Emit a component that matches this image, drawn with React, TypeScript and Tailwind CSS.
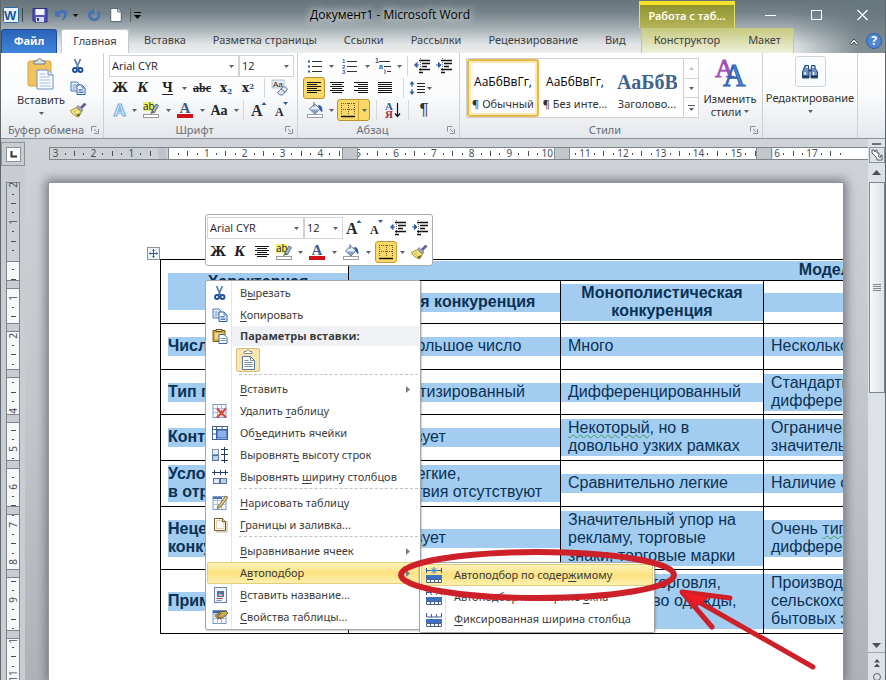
import React from "react";

const UI = "font-['Noto_Sans','Open_Sans',sans-serif]";
const DOC = "font-['Liberation_Sans',Arial,sans-serif]";
const SERIF = "font-['Liberation_Serif',serif]";
const SLAB = "font-['DejaVu_Serif',serif]";

/* ---------- small drawings ---------- */

function Caret({ className = "" }: { className?: string }) {
  return (
    <svg viewBox="0 0 5 3" className={`h-[3px] w-[5px] shrink-0 ${className}`} aria-hidden="true">
      <path d="M0 0h5L2.5 3z" fill="#5c6066" />
    </svg>
  );
}

function Svg({ size = "h-4 w-4", box = "0 0 16 16", children }: { size?: string; box?: string; children: React.ReactNode }) {
  return (
    <svg viewBox={box} className={`shrink-0 overflow-visible ${size}`} fill="none" aria-hidden="true">
      {children}
    </svg>
  );
}

const Scissors = () => (
  <Svg>
    <path d="M4.500 1l4 9M10.500 1l-4 9" stroke="#5f7fa8" strokeWidth="1.800" />
    <circle cx="5" cy="12" r="2" stroke="#1f4f9b" strokeWidth="1.900" />
    <circle cx="10.500" cy="12" r="2" stroke="#1f4f9b" strokeWidth="1.900" />
  </Svg>
);

const Copy = () => (
  <Svg>
    <path d="M1 2h6l2 2v7H1z" fill="#eef4fb" stroke="#4b76b5" />
    <path d="M2.500 5h4M2.500 7h4M2.500 9h3" stroke="#6f95cc" />
    <path d="M7 5h5l3 3v6.500H7z" fill="#f7fbff" stroke="#2d5ea8" />
    <path d="M12 5v3h3M8.500 9.500h4M8.500 11h5M8.500 12.500h5" stroke="#4f80c4" />
  </Svg>
);

const Brush = () => (
  <Svg>
    <path d="M10.500 5l4-4L16 2.500l-4 4z" fill="#5a5aa0" stroke="#3c3c72" strokeWidth=".6" />
    <path d="M8 3.500l5 4.500-1.500 2L6.500 5.500z" fill="#a8a8c0" stroke="#5b5b80" strokeWidth=".6" />
    <path d="M6.500 5.500L.5 8.500c1 3 4 5.500 8 6.500l3-5z" fill="#f3e483" stroke="#8c7a22" strokeWidth=".8" />
    <path d="M3 9l5 5M7 8l-3 2" stroke="#d9bd4a" />
    <path d="M6 12.500l2.500 2.500 2.500-4z" fill="#7d6a1d" />
  </Svg>
);

const Clipboard = ({ size = "h-8 w-8" }: { size?: string }) => (
  <Svg size={size} box="0 0 32 32">
    <rect x="3" y="3" width="23" height="25" rx="2" fill="#f1c25e" stroke="#d5a345" />
    <path d="M9 6V3h3c0-3 5-3 5 0h3v3z" fill="#e2e5ea" stroke="#70767f" />
    <path d="M12 12h11l5 5v14H12z" fill="#fdfeff" stroke="#6f8fbb" />
    <path d="M23 12v5h5" fill="#dde8f6" stroke="#6f8fbb" />
    <path d="M14.500 16h6M14.500 19h10M14.500 22h11M14.500 25h11M14.500 28h11" stroke="#9fb9dc" />
  </Svg>
);

const Grow = () => (
  <Svg box="0 0 18 18" size="h-[18px] w-[18px]">
    <text x="1" y="15" fontSize="16" fontWeight="bold" fontFamily="Liberation Serif, serif" fill="#26282b">A</text>
    <path d="M11.500 4L14 1l2.500 3z" fill="#2f5a9c" />
  </Svg>
);

const Shrink = () => (
  <Svg box="0 0 18 18" size="h-[18px] w-[18px]">
    <text x="3" y="15" fontSize="12" fontWeight="bold" fontFamily="Liberation Serif, serif" fill="#26282b">A</text>
    <path d="M11 1h5l-2.500 3z" fill="#2f5a9c" />
  </Svg>
);

const Highlighter = () => (
  <Svg>
    <rect x="0" y="0" width="11" height="9" fill="#eeee6a" />
    <text x="0" y="8" fontSize="10" fontFamily="Open Sans, sans-serif" fontWeight="normal" fill="#222">ab</text>
    <path d="M9 9l4-7 2.500 1.500-4 7z" fill="#9fb4cf" stroke="#41597c" strokeWidth=".8" />
    <path d="M7 12l2-3.500 3 2z" fill="#5e7047" />
    <rect x=".5" y="12.500" width="15" height="3" fill="#fff" stroke="#9a9a9a" />
  </Svg>
);

const FontColor = () => (
  <Svg>
    <text x="2.500" y="11" fontSize="15" fontWeight="bold" fontFamily="Liberation Serif, serif" fill="#3b5b8f">A</text>
    <rect x="0" y="12" width="16" height="4" fill="#d01216" />
  </Svg>
);

const Bucket = () => (
  <Svg>
    <path d="M7 0v5M2.500 7l5-5 5.500 4.500-5 5.500z" stroke="#56718f" fill="#e8eff8" />
    <path d="M3.500 7.500h8.500L8 11.500z" fill="#7fa4d3" />
    <path d="M11 3c3.500 0 4.500 2.500 4.500 7-2 0-2.500-3-3.500-4z" fill="#2d5da6" />
    <rect x=".5" y="12.500" width="15" height="3" fill="#fff" stroke="#9aa0a8" />
  </Svg>
);

const Borders = () => (
  <Svg>
    <path d="M1.500 1v12M8.500 1v12M14.500 1v12M1 1.500h14M1 7.500h14" stroke="#6d5a26" strokeDasharray="1 1" />
    <path d="M1 14.500h14" stroke="#111" strokeWidth="1.500" />
  </Svg>
);

const Indent = ({ right = false }: { right?: boolean }) => (
  <Svg>
    <path d="M6.500 0v16" stroke="#777" strokeDasharray="1 1" />
    <path d="M5 2.500h11M8 5.500h8M8 8.500h5M5 11.500h11M5 14.500h4" stroke="#111" strokeWidth="1.500" />
    {right ? (
      <path d="M0 7h3M2.500 4.500L5 7 2.500 9.500z" stroke="#2f5da8" fill="#2f5da8" />
    ) : (
      <path d="M5 7H3M3 4.500L.5 7 3 9.500z" stroke="#2f5da8" fill="#2f5da8" />
    )}
  </Svg>
);

const Lines = ({ kind }: { kind: "left" | "center" | "right" | "full" }) => {
  const d = {
    left: "M1 2.500h14M1 4.500h10M1 6.500h14M1 8.500h10M1 10.500h14M1 12.500h10",
    center: "M1 2.500h14M3 4.500h10M1 6.500h14M3 8.500h10M1 10.500h14M3 12.500h10",
    right: "M1 2.500h14M5 4.500h10M1 6.500h14M5 8.500h10M1 10.500h14M5 12.500h10",
    full: "M1 2.500h14M1 4.500h14M1 6.500h14M1 8.500h14M1 10.500h14M1 12.500h14",
  }[kind];
  return (
    <Svg>
      <path d={d} stroke="#141414" />
    </Svg>
  );
};

const Bullets = () => (
  <Svg>
    <path d="M5 3.500h10M5 8.500h10M5 13.500h10" stroke="#333" />
    <path d="M1 2.500h2v2H1zM1 7.500h2v2H1zM1 12.500h2v2H1z" fill="#2f5a9c" />
  </Svg>
);

const Numbers = () => (
  <Svg>
    <path d="M6 3.500h10M6 8.500h10M6 13.500h10" stroke="#333" />
    <g fontSize="6" fontWeight="bold" fontFamily="Liberation Sans, sans-serif" fill="#2f5a9c">
      <text x="1" y="5">1</text>
      <text x="1" y="10.500">2</text>
      <text x="1" y="16">3</text>
    </g>
  </Svg>
);

const MultiLevel = () => (
  <Svg>
    <path d="M4 3.500h11M9 8.500h7M12 13.500h4" stroke="#333" />
    <g fontSize="7" fontWeight="bold" fontFamily="Liberation Sans, sans-serif" fill="#2f5a9c">
      <text x="0" y="5">1</text>
      <text x="4" y="10.500">a</text>
      <text x="9" y="16">i</text>
    </g>
  </Svg>
);

const LineSpacing = () => (
  <Svg>
    <path d="M3 2v12" stroke="#2f5da8" strokeWidth="1.200" strokeDasharray="5 2" />
    <path d="M.5 4.500L3 1l2.500 3.500zM.5 11.500L3 15l2.500-3.500z" fill="#2f5da8" />
    <path d="M8 3.500h8M8 6.500h8M8 9.500h8M8 12.500h8" stroke="#222" />
  </Svg>
);

const SortIcon = () => (
  <Svg>
    <g fontSize="11" fontWeight="bold" fontFamily="Liberation Serif, serif">
      <text x="0" y="7.500" fill="#2f5a9c">А</text>
      <text x="0" y="16" fill="#a2303a">Я</text>
    </g>
    <path d="M12.500 1v13M10 11.500l2.500 3 2.500-3" stroke="#111" strokeWidth="1.200" />
  </Svg>
);

const ClearFormat = () => (
  <Svg>
    <rect x="0" y="0" width="12" height="8" fill="#e7edf5" stroke="#8492a6" strokeWidth=".5" />
    <text x="1" y="7" fontSize="8" fontFamily="Liberation Sans, sans-serif" fontWeight="normal" fill="#222">Aa</text>
    <path d="M6 12l5-5c1-1 5 1 4 3l-4 4.500c-2 1.500-6-.5-5-2.500z" fill="#dfe6f0" stroke="#5c6f8e" />
    <path d="M9 9l4 3" stroke="#5c6f8e" />
  </Svg>
);

const TextEffect = () => (
  <Svg>
    <text x="1.500" y="14" fontSize="17" fontWeight="bold" fontFamily="Liberation Sans, sans-serif" fill="#f4faff" stroke="#74b2dc" strokeWidth="1.200">A</text>
  </Svg>
);

const StylesIcon = () => (
  <Svg size="h-[30px] w-[30px]" box="0 0 30 30">
    <text x="0" y="19" fontSize="26" fontFamily="Liberation Serif, serif" fill="#a04fb4" stroke="#a04fb4" strokeWidth=".8">A</text>
    <text x="8" y="28" fontSize="31" fontFamily="Liberation Serif, serif" fill="#4f86d8" stroke="#2c5fb0" strokeWidth="1">A</text>
  </Svg>
);

const Binoculars = () => (
  <Svg>
    <path d="M3 1.500h3.500V4L7 6v8H.5V8zM9.500 1.500H13V4l2.500 4v6H9V6z" fill="#6f94c8" stroke="#24456f" />
    <path d="M3 8v3M11.500 8v3M5 2v2M11 2v2" stroke="#eef4fc" strokeWidth="1.500" />
    <path d="M.5 12.500h6.500M9 12.500h6.500" stroke="#16325a" strokeWidth="2" />
    <path d="M6.500 6.500h3" stroke="#24456f" strokeWidth="2" />
  </Svg>
);

const GridBase = () => (
  <>
    <rect x="1" y="1.500" width="13" height="13" fill="#f6f9fd" stroke="#7f9cc4" />
    <path d="M1 5.500h13M1 9.500h13M5.500 1.500v13M9.500 1.500v13" stroke="#a6bcdb" />
  </>
);

const DeleteTable = () => (
  <Svg>
    <GridBase />
    <path d="M5 5.500l9 9M14 5.500l-9 9" stroke="#d8402f" strokeWidth="2" />
  </Svg>
);

const MergeCells = () => (
  <Svg>
    <rect x=".5" y="1.500" width="15" height="13" fill="#fff" stroke="#3f649c" />
    <path d="M.5 4.500h15M4.500 1.500v13M.5 9h4M10 1.500v3" stroke="#3f649c" />
    <rect x="5" y="5" width="10" height="8" fill="#8bb2ee" stroke="#2d5aa7" />
  </Svg>
);

const EvenRows = () => (
  <Svg>
    <rect x=".5" y="2.500" width="6" height="5" fill="#e7eef8" stroke="#7d93b3" />
    <rect x=".5" y="8.500" width="6" height="5" fill="#bcd0ea" stroke="#54749f" />
    <path d="M9 2.500h7M9 7.500h7M9 13.500h7M12.500 0v16" stroke="#243d63" />
  </Svg>
);

const EvenCols = () => (
  <Svg>
    <path d="M0 3.500h16M2.500 1v5M8.500 1v5M13.500 1v5" stroke="#243d63" />
    <rect x="1.500" y="9.500" width="6" height="5" fill="#e7eef8" stroke="#54749f" />
    <rect x="8.500" y="9.500" width="6" height="5" fill="#bcd0ea" stroke="#54749f" />
  </Svg>
);

const DrawTable = () => (
  <Svg>
    <GridBase />
    <path d="M1 3h9" stroke="#4776bb" strokeWidth="2" />
    <path d="M6 11.500L13.500 1 16 2.500 8.500 12l-3 1.500z" fill="#e5c682" stroke="#6e5221" strokeWidth=".8" />
  </Svg>
);

const BordersFill = () => (
  <Svg>
    <path d="M4 15h11V4" stroke="#c2ac85" />
    <path d="M2.500 1.500h8l3 3v9h-11z" fill="#fff" stroke="#7c542a" />
    <path d="M4.500 3.500h5.500v2h2v6H4.500z" stroke="#e2d0a6" />
    <path d="M10.500 1.500v3h3" fill="#f4ead2" stroke="#7c542a" />
  </Svg>
);

const Caption = () => (
  <Svg>
    <rect x="2.500" y=".5" width="12" height="15" fill="#f0f4fa" stroke="#6f84a4" />
    <rect x="5" y="4" width="7" height="6" fill="#5272a4" />
    <path d="M6 9l2-3 3 3z" fill="#e7b09d" />
    <path d="M4.500 11.500h6" stroke="#b5403a" />
    <path d="M4.500 13.500h5" stroke="#7890b5" />
  </Svg>
);

const TableProps = () => (
  <Svg>
    <GridBase />
    <path d="M1 3h14" stroke="#3766ac" strokeWidth="2.500" />
    <path d="M3 7l5-4 6-1 2 2-4 4-6 2z" fill="#caa658" stroke="#5f4a1c" strokeWidth=".8" />
    <path d="M5 7l4 3M9 4l-3 3" stroke="#5f4a1c" />
  </Svg>
);

const PasteSmall = () => (
  <Svg>
    <path d="M1 2.500h12v11H1z" fill="#d8ab3f" stroke="#7d5c17" />
    <path d="M4 3.500V1.500h6v2z" fill="#efe6bd" stroke="#5c5026" />
    <path d="M3 5h8v6H3z" fill="#f2d884" />
    <path d="M7 6.500h5l3 3v6H7z" fill="#fff" stroke="#3f68a7" />
    <path d="M8.500 10.500h5M8.500 12.500h5" stroke="#6d93cb" />
  </Svg>
);

const KeepText = () => (
  <Svg size="h-5 w-5" box="0 0 20 20">
    <path d="M6 3.500v-2h2.500c0-2 3-2 3 0H14v2z" fill="#fff" stroke="#8a8f96" />
    <path d="M4.500 6.500h8l4 4v9h-12z" fill="#fff" stroke="#55749f" />
    <path d="M12.500 6.500v4h4M6.500 10.500h4M6.500 12.500h8M6.500 14.500h8M6.500 16.500h8" stroke="#7d8da4" />
  </Svg>
);

const AutoFit = ({ kind }: { kind: "content" | "window" | "fixed" }) => (
  <Svg>
    {kind === "content" && (
      <>
        <path d="M.5 1v5M15.500 1v5M0 3.500h5M11 3.500h5" stroke="#3a5b8c" />
        <path d="M8 0v7M4.500 3.500h7M5.500 1l5 5M10.500 1l-5 5" stroke="#3d86d0" />
      </>
    )}
    {kind === "window" && <path d="M.5 1v5M15.500 1v5M1 3.500h5M10 3.500h5M6 1L4 3.500 6 6M10 1l2 2.500L10 6" stroke="#3a5b8c" />}
    {kind === "fixed" && <path d="M.5 2v4h15V2M5.500 3v3M10.500 3v3" stroke="#3a5b8c" />}
    <rect x="0" y="8" width="16" height="4" fill="#3f71c2" />
    <path d="M.5 12.500h15v3H.5zM4.500 12.500v3M8.500 12.500v3M12.500 12.500v3" fill="#f6f9fd" stroke="#4b6285" />
  </Svg>
);

/* ---------- controls ---------- */

function Tool({ label, w, children }: { label: string; w: string; children: React.ReactNode }) {
  return (
    <button type="button" aria-label={label} className={`flex h-[22px] shrink-0 items-center justify-center ${w}`}>
      {children}
    </button>
  );
}

const Divider = ({ w = "w-2" }: { w?: string }) => (
  <span className={`flex h-5 shrink-0 justify-center ${w}`}>
    <span className="w-px bg-[#d3d6da]" />
  </span>
);

function Combo({ label, value, w }: { label: string; value: string; w: string }) {
  return (
    <span className={`relative flex h-[22px] shrink-0 items-center border border-[#d0d3d7] bg-white ${w}`}>
      <select aria-label={label} defaultValue={value} className="h-full w-full appearance-none bg-transparent pl-0.5 font-['Open_Sans',sans-serif] text-[11px] font-normal text-[#1c1c1c]">
        <option>{value}</option>
      </select>
      <Caret className="pointer-events-none absolute right-1" />
    </span>
  );
}

function Group({ title, w, launcher = true, children }: { title: string; w: string; launcher?: boolean; children: React.ReactNode }) {
  return (
    <section className={`flex shrink-0 flex-col border-r border-[#cdd1d6] ${w}`}>
      <div className="flex-1">{children}</div>
      <footer className="flex h-4 items-center text-[11px] leading-4 text-[#6a6f78]">
        <span className="flex-1 whitespace-nowrap text-center">{title}</span>
        {launcher && (
          <button type="button" aria-label={`${title}: параметры`} className="mr-1 h-2 w-2 shrink-0">
            <Svg size="h-2 w-2" box="0 0 8 8">
              <path d="M.5 5.500v-5h5M3 3l3 3M7.500 3v4.500H3" stroke="#8b9099" />
            </Svg>
          </button>
        )}
      </footer>
    </section>
  );
}

/* ---------- title bar and tabs ---------- */

function TitleBar() {
  return (
    <header className="flex h-7 shrink-0">
      <div className="flex w-[140px] items-center pl-0.5 pt-0.5">
        <Svg>
          <rect x=".5" y=".5" width="15" height="15" rx="1" fill="#eaf3fb" stroke="#2c6aa8" />
          <text x="1" y="12.500" fontSize="13" fontWeight="bold" fontFamily="Liberation Sans, sans-serif" fill="#17599c">W</text>
        </Svg>
        <span className="mx-[3px] h-3.5 w-px bg-[#3f484c]" />
        <Tool label="Сохранить" w="w-7">
          <Svg>
            <path d="M1 1.500h14v13.500H2.500L1 13.500z" fill="#5353b8" stroke="#2c2c7c" />
            <rect x="3.500" y="2" width="9" height="6" fill="#f2f4fb" />
            <rect x="4" y="10" width="8" height="5" fill="#d4d8ea" />
            <rect x="5" y="11" width="2" height="3" fill="#33337a" />
          </Svg>
        </Tool>
        <Tool label="Отменить" w="w-4">
          <Svg size="h-3.5 w-3.5">
            <path d="M0 2v8h7L4.500 7.500C8 4 12 6 10 10l-3 4.500C15 12 16 3 10 2 7 1.500 4.500 3.500 3 5z" fill="#4472b8" />
          </Svg>
        </Tool>
        <Tool label="Список отмены" w="w-3">
          <svg viewBox="0 0 5 3" className="h-[3px] w-[5px]"><path d="M0 0h5L2.500 3z" /></svg>
        </Tool>
        <Tool label="Повторить" w="w-6">
          <Svg size="h-3.5 w-3.5">
            <path d="M4.500 4a5.500 5.500 0 1 0 7.500 0" stroke="#4472b8" strokeWidth="3" />
            <path d="M8 0v7H1z" fill="#4472b8" />
          </Svg>
        </Tool>
        <Tool label="Создать" w="w-5">
          <Svg size="h-3.5 w-3.5">
            <path d="M2 .5h8l4 4v11H2z" fill="#fff" stroke="#4e5a66" />
            <path d="M10 .5v4h4" fill="#cfdae8" stroke="#4e5a66" />
          </Svg>
        </Tool>
        <span className="ml-1 mr-1 h-3.5 w-px bg-[#565f64]" />
        <button type="button" aria-label="Настройка панели" className="flex flex-col items-center gap-0.5">
          <span className="h-px w-[7px] bg-black" />
          <svg viewBox="0 0 7 4" className="h-1 w-[7px]"><path d="M0 0h7L3.500 4z" /></svg>
        </button>
      </div>
      <h1 className="flex flex-1 items-center justify-center pt-0.5 font-['Open_Sans',sans-serif] text-[12px] text-black [text-shadow:0_0_8px_#fff,0_0_10px_#dfe5e8]">
        Документ1 - Microsoft Word
      </h1>
      <div className="mt-px flex w-24 shrink-0 items-center justify-center border-x border-t-4 border-x-[#dfe06c] border-t-[#f6e02c] bg-linear-to-b from-[#8f942f] to-[#b5b55a] text-[11px] font-semibold text-[#fffff0]">
        Работа с таб...
      </div>
      <div className="ml-3 flex">
        <button type="button" aria-label="Свернуть" className="flex w-[46px] items-center justify-center">
          <Svg size="h-[11px] w-[11px]" box="0 0 11 11"><path d="M0 6.500h11" stroke="#fff" /></Svg>
        </button>
        <button type="button" aria-label="Развернуть" className="flex w-[46px] items-center justify-center">
          <Svg size="h-[11px] w-[11px]" box="0 0 11 11"><path d="M.5 1.500h10v9H.5z" stroke="#fff" /></Svg>
        </button>
        <button type="button" aria-label="Закрыть" className="flex w-[46px] items-center justify-center">
          <Svg size="h-[11px] w-[11px]" box="0 0 11 11"><path d="M.5 1l10 10M10.500 1l-10 10" stroke="#fff" strokeWidth="1.200" /></Svg>
        </button>
      </div>
    </header>
  );
}

function Tabs() {
  const tabs = ["Вставка", "Разметка страницы", "Ссылки", "Рассылки", "Рецензирование", "Вид"];
  return (
    <nav className="flex h-[25px] shrink-0 items-stretch text-[11px] text-[#3c3f43]">
      <button type="button" className="mt-px w-14 shrink-0 rounded-t-[3px] border border-b-0 border-[#1d4a93] bg-linear-to-b from-[#2a63b8] to-[#3f86dd] font-bold text-white">Файл</button>
      <button type="button" className="ml-1 mr-px mt-px w-[68px] shrink-0 rounded-t-[3px] border border-b-0 border-[#c3c8cd] bg-white">Главная</button>
      {tabs.map((t) => (
        <button key={t} type="button" className="shrink-0 pl-3.5 pr-[13px]">{t}</button>
      ))}
      <div className="ml-0.5 flex shrink-0 border-x border-[#c9cb6a] bg-linear-to-b from-[#c5c87b] to-[#f0f1dc]">
        <button type="button" className="pl-3 pr-3.5">Конструктор</button>
        <button type="button" className="pl-3.5 pr-3">Макет</button>
      </div>
      <div className="flex flex-1 items-center justify-end gap-[7px] pr-[3px]">
        <button type="button" aria-label="Свернуть ленту">
          <Svg size="h-2.5 w-2.5" box="0 0 10 10"><path d="M1 7.500L5 3l4 4.500L7.500 9 5 6 2.500 9z" fill="#fff" stroke="#333" strokeWidth=".9" /></Svg>
        </button>
        <button type="button" aria-label="Справка" className="flex h-4 w-4 items-center justify-center rounded-full border border-[#2f5ea8] bg-[#4f86d3] text-[12px] font-bold leading-none text-white">?</button>
      </div>
    </nav>
  );
}

/* ---------- ribbon ---------- */

function Ribbon() {
  return (
    <div className="flex h-[86px] shrink-0 border-b border-[#8b9199] bg-linear-to-b from-white via-[#fafbfc] to-[#e4e7ec]">
      <Group title="Буфер обмена" w="w-[103px]">
        <div className="flex pl-[15px]">
          <button type="button" className="flex w-[50px] flex-col items-center pt-[5px] text-[11px] text-[#333]">
            <Clipboard />
            <span className="mt-0.5 leading-4">Вставить</span>
            <Caret className="mt-1" />
          </button>
          <div className="flex flex-col pt-0.5">
            <Tool label="Вырезать" w="w-6"><Scissors /></Tool>
            <Tool label="Копировать" w="w-6"><Copy /></Tool>
            <Tool label="Формат по образцу" w="w-6"><Brush /></Tool>
          </div>
        </div>
      </Group>

      <Group title="Шрифт" w="w-[194px]">
        <div className="pl-[5px] pt-0.5">
          <div className="flex">
            <Combo label="Шрифт" value="Arial CYR" w="w-[130px]" />
            <Combo label="Размер шрифта" value="12" w="w-[55px]" />
          </div>
          <div className={`flex items-center text-[12px] font-bold text-[#222] ${SLAB}`}>
            <Tool label="Полужирный" w="w-[22px]">Ж</Tool>
            <Tool label="Курсив" w="w-6"><i>К</i></Tool>
            <Tool label="Подчеркнутый" w="w-[25px]"><u className="underline-offset-2">Ч</u></Tool>
            <Tool label="Тип подчеркивания" w="w-2"><Caret /></Tool>
            <Tool label="Зачеркнутый" w="w-7"><s className={`text-[12px] ${SERIF}`}>abc</s></Tool>
            <Tool label="Подстрочный" w="w-5"><span>x<sub className="text-[7px] text-[#2f5a9c]">2</sub></span></Tool>
            <Tool label="Надстрочный" w="w-6"><span>x<sup className="text-[7px] text-[#2f5a9c]">2</sup></span></Tool>
            <Divider w="w-2" />
            <Tool label="Очистить формат" w="w-6"><ClearFormat /></Tool>
          </div>
          <div className={`flex items-center text-[14px] font-bold text-[#222] ${SERIF}`}>
            <Tool label="Текстовые эффекты" w="w-[22px]"><TextEffect /></Tool>
            <Tool label="Варианты эффектов" w="w-1.5"><Caret /></Tool>
            <Tool label="Цвет выделения" w="w-7"><Highlighter /></Tool>
            <Tool label="Варианты выделения" w="w-1.5"><Caret /></Tool>
            <Tool label="Цвет текста" w="w-7"><FontColor /></Tool>
            <Tool label="Варианты цвета" w="w-1.5"><Caret /></Tool>
            <Tool label="Регистр" w="w-7">Aa</Tool>
            <Tool label="Варианты регистра" w="w-1.5"><Caret /></Tool>
            <Divider w="w-2" />
            <Tool label="Увеличить размер" w="w-6"><Grow /></Tool>
            <Tool label="Уменьшить размер" w="w-5"><Shrink /></Tool>
          </div>
        </div>
      </Group>

      <Group title="Абзац" w="w-[162px]">
        <div className="pl-[5px] pt-0.5">
          <div className="flex items-center">
            <Tool label="Маркеры" w="w-6"><Bullets /></Tool>
            <Tool label="Виды маркеров" w="w-2"><Caret /></Tool>
            <Tool label="Нумерация" w="w-7"><Numbers /></Tool>
            <Tool label="Виды нумерации" w="w-2"><Caret /></Tool>
            <Tool label="Многоуровневый список" w="w-6"><MultiLevel /></Tool>
            <Tool label="Виды списков" w="w-2"><Caret /></Tool>
            <Divider w="w-2" />
            <Tool label="Уменьшить отступ" w="w-[22px]"><Indent /></Tool>
            <Tool label="Увеличить отступ" w="w-[22px]"><Indent right /></Tool>
          </div>
          <div className="flex items-center">
            <button type="button" aria-label="По левому краю" className="flex h-[22px] w-[22px] items-center justify-center rounded-[3px] border border-[#b9912f] bg-[#fbd968]">
              <Lines kind="left" />
            </button>
            <Tool label="По центру" w="w-6"><Lines kind="center" /></Tool>
            <Tool label="По правому краю" w="w-6"><Lines kind="right" /></Tool>
            <Tool label="По ширине" w="w-6"><Lines kind="full" /></Tool>
            <Divider w="w-3" />
            <Tool label="Интервал" w="w-4"><LineSpacing /></Tool>
            <Tool label="Варианты интервала" w="w-2"><Caret /></Tool>
          </div>
          <div className="flex items-center">
            <Tool label="Заливка" w="w-6"><Bucket /></Tool>
            <Tool label="Варианты заливки" w="w-2"><Caret /></Tool>
            <div className="ml-0.5 flex h-[22px] w-[33px] rounded-[3px] border border-[#b9912f] bg-[#fbd968]">
              <button type="button" aria-label="Границы" className="flex w-5 items-center justify-center"><Borders /></button>
              <button type="button" aria-label="Виды границ" className="flex flex-1 items-center justify-center border-l border-[#cfa63f]"><Caret /></button>
            </div>
            <Divider w="w-3" />
            <Tool label="Сортировка" w="w-[22px]"><SortIcon /></Tool>
            <Divider w="w-2" />
            <Tool label="Показать все знаки" w="w-6"><span className="font-['Liberation_Sans',sans-serif] text-[17px] text-[#333]">¶</span></Tool>
          </div>
        </div>
      </Group>

      <Group title="Стили" w="w-[303px]">
        <div className="flex pl-[6px] pt-[5px]">
          <div className="flex h-[60px] w-[233px] border border-[#cfd3d8] bg-white text-[11px] text-[#333]">
            <button type="button" className="flex w-[72px] shrink-0 flex-col items-center justify-between rounded-[3px] border-2 border-[#e6b94c] pb-[3px] pt-[11px] shadow-[inset_0_0_0_2px_#fdebac]">
              <span className="font-['Open_Sans',sans-serif] text-[12px] leading-5 text-black">АаБбВвГг,</span>
              <span className="whitespace-nowrap leading-4">¶ Обычный</span>
            </button>
            <button type="button" className="flex w-[72px] shrink-0 flex-col items-center justify-between pb-[5px] pt-[13px]">
              <span className="font-['Open_Sans',sans-serif] text-[12px] leading-5 text-black">АаБбВвГг,</span>
              <span className="whitespace-nowrap leading-4">¶ Без инте...</span>
            </button>
            <button type="button" className="flex w-[72px] shrink-0 flex-col items-center justify-between pb-[5px] pt-[13px]">
              <span className={`w-[60px] overflow-hidden text-left text-[20px] font-bold leading-5 text-[#3d638e] ${SERIF}`}>АаБбВв</span>
              <span className="whitespace-nowrap leading-4">Заголово...</span>
            </button>
            <div className="flex flex-1 flex-col border-l border-[#cfd3d8]">
              <button type="button" aria-label="Вверх" className="flex flex-1 items-center justify-center border-b border-[#cfd3d8]"><Caret className="rotate-180 opacity-40" /></button>
              <button type="button" aria-label="Вниз" className="flex flex-1 items-center justify-center border-b border-[#cfd3d8]"><Caret /></button>
              <button type="button" aria-label="Все стили" className="flex flex-1 flex-col items-center justify-center gap-0.5"><span className="h-px w-[7px] bg-[#5c6066]" /><Caret /></button>
            </div>
          </div>
          <button type="button" className="flex w-[62px] flex-col items-center text-[11px] leading-[13px] text-[#333]">
            <StylesIcon />
            <span className="mt-1">Изменить</span>
            <span className="flex items-center gap-[3px]">стили <Caret /></span>
          </button>
        </div>
      </Group>

      <Group title="" w="w-[95px]" launcher={false}>
        <button type="button" className="flex w-full flex-col items-center pt-[3px] text-[11px] text-[#333]">
          <span className="flex h-[31px] w-[31px] items-center justify-center rounded-[3px] border border-[#cfd3d8] bg-[#fbfcfd]"><Binoculars /></span>
          <span className="mt-[3px] leading-4">Редактирование</span>
          <Caret className="mt-1" />
        </button>
      </Group>
    </div>
  );
}

/* ---------- rulers ---------- */

function HorizontalRuler() {
  const cells = Array.from({ length: 22 }, (_, i) => i - 3);
  return (
    <div className="relative ml-6 mt-2 h-[13px] overflow-hidden border-y border-l border-[#7d838b] bg-white">
      <div className="absolute inset-y-0 left-0 w-[119px] border-r border-[#7d838b] bg-[#cdd1d6]" />
      <div className="relative -ml-[18px] grid h-full w-[832px] grid-cols-22 text-[10px] leading-[11px] text-[#4a4e54]">
        {cells.map((n) => (
          <div key={n} className="grid grid-cols-4 place-items-center">
            <span className="h-[5px] w-px bg-[#4a4e54]" />
            <span className="h-0.5 w-px bg-[#4a4e54]" />
            <span className="w-0"><span className="flex justify-center whitespace-nowrap">{n === 0 || n === 18 ? "" : Math.abs(n)}</span></span>
            <span className={n === 18 ? "" : "h-0.5 w-px bg-[#4a4e54]"} />
          </div>
        ))}
      </div>
      <span className="absolute inset-y-0 left-[108px] w-2 bg-[#c0c4c9]" />
      <span className="absolute inset-y-0 left-[292px] w-4 border-x border-[#8b9097] bg-[#c3c7cc]" />
      <span className="absolute inset-y-0 left-[504px] w-4 border-x border-[#8b9097] bg-[#c3c7cc]" />
      <span className="absolute inset-y-0 left-[706px] w-4 border-x border-[#8b9097] bg-[#c3c7cc]" />
    </div>
  );
}

function VerticalRuler() {
  const cells = Array.from({ length: 14 }, (_, i) => i - 2);
  const marks = ["top-[97px]", "top-[140px]", "top-[186px]", "top-[231px]", "top-[277px]", "top-[323px]", "top-[386px]", "top-[447px]"];
  return (
    <div className="relative ml-[5px] mt-4 w-3.5 flex-1 overflow-hidden border-x border-t border-[#7d838b] bg-[#f7f8f9]">
      <div className="absolute inset-x-0 top-0 h-[79px] border-b border-[#7d838b] bg-[#cdd1d6]" />
      <div className="relative -mt-[22px] grid h-[529px] grid-rows-14 text-[10px] leading-[10px] text-[#4a4e54]">
        {cells.map((n) => (
          <div key={n} className="grid grid-rows-4 place-items-center">
            <span className="h-px w-[5px] bg-[#4a4e54]" />
            <span className="h-px w-0.5 bg-[#4a4e54]" />
            <span className="flex h-0 w-0 items-center justify-center"><span className="-rotate-90">{n === 0 ? "" : Math.abs(n)}</span></span>
            <span className="h-px w-0.5 bg-[#4a4e54]" />
          </div>
        ))}
      </div>
      {marks.map((m) => (
        <span key={m} className={`absolute inset-x-0 h-[9px] border-y border-[#7d838b] bg-[#c9cdd2] ${m}`} />
      ))}
    </div>
  );
}

/* ---------- document ---------- */

function Mark({ lines, className = "" }: { lines: React.ReactNode[]; className?: string }) {
  return (
    <div className={`min-h-[19px] overflow-hidden whitespace-nowrap bg-[#a3cdf0] pb-px leading-[18px] ${className}`}>
      {lines.map((l, i) => (
        <div key={i}>{l}</div>
      ))}
    </div>
  );
}

const Wavy = ({ children }: { children: React.ReactNode }) => (
  <span className="underline decoration-[#3f9a5c] decoration-wavy decoration-1">{children}</span>
);

const rows: { h: string; head: string[]; cells: React.ReactNode[][] }[] = [
  { h: "h-[46px]", head: ["Число фирм"], cells: [["Очень большое число"], ["Много"], ["Несколько"]] },
  { h: "h-[45px]", head: ["Тип продукта"], cells: [["Стандартизированный"], ["Дифференцированный"], ["Стандартизированный", "дифференцированный"]] },
  { h: "h-[46px]", head: ["Контроль"], cells: [["Отсутствует"], [<><Wavy>Некоторый</Wavy>, но в</>, "довольно узких рамках"], ["Ограниченный", "значительный"]] },
  { h: "h-[46px]", head: ["Условия", "в отрасли"], cells: [["Очень легкие,", "препятствия отсутствуют"], ["Сравнительно легкие"], ["Наличие ограничений"]] },
  { h: "h-[63px]", head: ["Неценовая", "конкуренция"], cells: [["Отсутствует"], ["Значительный упор на", "рекламу, торговые", "знаки, торговые марки"], [<>Очень <Wavy>типична</Wavy></>, "дифференциация"]] },
  { h: "h-[64px]", head: ["Примеры"], cells: [["Сельское хозяйство"], ["Розничная торговля,", "производство одежды,", "обуви"], ["Производство", "сельскохозяйственных", "бытовых электроприборов"]] },
];

function DocumentTable() {
  const cell = "border border-black p-0 align-middle";
  return (
    <table className={`ml-[111px] mt-[76px] w-[1206px] table-fixed border-collapse text-[16px] text-[#0b3154] ${DOC}`}>
      <colgroup>
        <col className="w-[188px]" />
        <col className="w-[212px]" />
        <col className="w-[203px]" />
        <col />
      </colgroup>
      <thead>
        <tr className="h-[21px]">
          <th rowSpan={2} className={`${cell} pl-[7px]`}><Mark lines={["Характерная", "особенность"]} /></th>
          <th colSpan={3} className={cell}><Mark lines={["Модели рынка"]} /></th>
        </tr>
        <tr className="h-[43px]">
          <th className={cell}><Mark lines={["Чистая конкуренция"]} /></th>
          <th className={cell}><Mark lines={["Монополистическая", "конкуренция"]} /></th>
          <th className={cell}><Mark lines={["Олигополия"]} /></th>
        </tr>
      </thead>
      <tbody>
        {rows.map((r) => (
          <tr key={r.head[0]} className={r.h}>
            <th className={`${cell} pl-[7px] text-left`}><Mark lines={r.head} /></th>
            {r.cells.map((c, i) => (
              <td key={i} className={cell}><Mark lines={c} className="pl-[7px]" /></td>
            ))}
          </tr>
        ))}
      </tbody>
    </table>
  );
}

/* ---------- floating toolbar and menus ---------- */

function MiniToolbar() {
  return (
    <div role="toolbar" aria-label="Форматирование" className="absolute left-[156px] top-[31px] w-[228px] rounded-[3px] border border-[#a7abb0] bg-white p-px">
      <div className="flex h-6 items-center">
        <Combo label="Шрифт выделения" value="Arial CYR" w="w-[97px]" />
        <Combo label="Размер выделения" value="12" w="w-[39px]" />
        <Tool label="Увеличить" w="w-[22px]"><Grow /></Tool>
        <Tool label="Уменьшить" w="w-[22px]"><Shrink /></Tool>
        <Tool label="Уменьшить отступ" w="w-[22px]"><Indent /></Tool>
        <Tool label="Увеличить отступ" w="w-[22px]"><Indent right /></Tool>
      </div>
      <div className={`flex h-6 items-center text-[12px] font-bold text-[#222] ${SLAB}`}>
        <Tool label="Полужирный" w="w-[22px]">Ж</Tool>
        <Tool label="Курсив" w="w-[22px]"><i>К</i></Tool>
        <Tool label="По центру" w="w-[22px]"><Lines kind="center" /></Tool>
        <Tool label="Выделение" w="w-[22px]"><Highlighter /></Tool>
        <Tool label="Варианты выделения" w="w-2.5"><Caret /></Tool>
        <Tool label="Цвет текста" w="w-6"><FontColor /></Tool>
        <Tool label="Варианты цвета" w="w-2.5"><Caret /></Tool>
        <Tool label="Заливка" w="w-6"><Bucket /></Tool>
        <Tool label="Варианты заливки" w="w-2.5"><Caret /></Tool>
        <button type="button" aria-label="Границы" className="ml-0.5 flex h-[22px] w-[22px] items-center justify-center rounded-[3px] border border-[#c49a37] bg-[#fbd968]"><Borders /></button>
        <Tool label="Виды границ" w="w-2.5"><Caret /></Tool>
        <Tool label="Формат по образцу" w="w-6"><Brush /></Tool>
      </div>
    </div>
  );
}

function MenuLabel({ text }: { text: string }) {
  const at = text.indexOf("&");
  return (
    <span className="whitespace-nowrap">
      {text.slice(0, at)}
      <span className="underline underline-offset-2">{text[at + 1]}</span>
      {text.slice(at + 2)}
    </span>
  );
}

function MenuItem({ text, icon, sub = false, active = false }: { text: string; icon?: React.ReactNode; sub?: boolean; active?: boolean }) {
  const skin = active ? "rounded-[2px] border-[#e3cf77] bg-linear-to-b from-[#fdf3b8] via-[#fbe17f] to-[#fdf0ae]" : "border-transparent";
  return (
    <button type="button" role="menuitem" className={`relative flex h-[22px] w-full items-center border text-left ${skin}`}>
      <span className="flex w-6 shrink-0 justify-center">{icon}</span>
      <span className="flex-1 pl-2"><MenuLabel text={text} /></span>
      {sub && (
        <svg viewBox="0 0 4 7" className="mr-2 h-[7px] w-1"><path d="M0 0v7l4-3.500z" fill="#7b7f85" /></svg>
      )}
    </button>
  );
}

const MenuLine = () => <div className="ml-8 mr-px h-1 border-t border-dashed border-[#bfc3c8]" />;

function ContextMenu() {
  return (
    <div role="menu" className="absolute left-[156px] top-[97px] w-[216px] rounded-[2px] border border-[#a3a7ac] bg-[linear-gradient(90deg,#fff_25px,#e2e4e7_25px,#e2e4e7_26px,#fff_26px)] p-px text-[11px] text-[#3b3b3b] shadow-[1px_1px_2px_#0003]">
      <MenuItem text="В&ырезать" icon={<Scissors />} />
      <MenuItem text="&Копировать" icon={<Copy />} />
      <div className="flex h-5 items-center">
        <span className="flex w-[25px] shrink-0 justify-center"><PasteSmall /></span>
        <span className="flex h-full flex-1 items-center bg-[#eff1f5] pl-2 font-['Open_Sans',sans-serif] font-bold">Параметры вставки:</span>
      </div>
      <div className="flex h-7 items-center pl-[29px]">
        <button type="button" aria-label="Сохранить только текст" className="flex h-6 w-6 items-center justify-center rounded-[2px] border border-[#dcbd7c] bg-[#fbe5b0]"><KeepText /></button>
      </div>
      <MenuLine />
      <MenuItem text="&Вставить" sub />
      <MenuItem text="Удалить &таблицу" icon={<DeleteTable />} />
      <MenuItem text="Об&ъединить ячейки" icon={<MergeCells />} />
      <MenuItem text="Выровнят&ь высоту строк" icon={<EvenRows />} />
      <MenuItem text="Выровнять &ширину столбцов" icon={<EvenCols />} />
      <MenuLine />
      <MenuItem text="&Нарисовать таблицу" icon={<DrawTable />} />
      <MenuItem text="&Границы и заливка..." icon={<BordersFill />} />
      <MenuLine />
      <MenuItem text="&Выравнивание ячеек" sub />
      <MenuItem text="А&втоподбор" sub active />
      <MenuItem text="&Вставить название..." icon={<Caption />} />
      <MenuItem text="&Свойства таблицы..." icon={<TableProps />} />
    </div>
  );
}

function AutoFitMenu() {
  return (
    <div role="menu" className="absolute left-[370px] top-[379px] w-[236px] rounded-[2px] border border-[#a3a7ac] bg-[linear-gradient(90deg,#fff_25px,#e2e4e7_25px,#e2e4e7_26px,#fff_26px)] px-px pb-0.5 pt-px text-[11px] text-[#3b3b3b] shadow-[1px_1px_2px_#0003]">
      <MenuItem text="Автоподбор по содер&жимому" icon={<AutoFit kind="content" />} active />
      <MenuItem text="Автоподбор по ширине &окна" icon={<AutoFit kind="window" />} />
      <MenuItem text="&Фиксированная ширина столбца" icon={<AutoFit kind="fixed" />} />
    </div>
  );
}

const Annotation = () => (
  <svg viewBox="0 0 794 497" className="pointer-events-none absolute left-0 top-0 h-[497px] w-[794px]" fill="none" stroke="#ce2029" strokeLinecap="round" strokeLinejoin="round" aria-hidden="true">
    <ellipse cx="488.500" cy="392" rx="136.500" ry="23" strokeWidth="6" />
    <path d="M764 484L634 410M681 415l-48-6 30 35" strokeWidth="5" />
    <path d="M634 409l26 6-13 8z" fill="#ef1c24" stroke="none" />
  </svg>
);

function ScrollBar() {
  return (
    <div className="flex w-[17px] shrink-0 flex-col items-center bg-[#dde1e8]">
      <span className="mt-1 h-0.5 w-[9px] shrink-0 bg-[#6b7079]" />
      <button type="button" aria-label="Линейка" className="mt-0.5 flex h-4 w-4 shrink-0 items-center justify-center border border-[#8d939b]">
        <Svg size="h-3 w-3" box="0 0 12 12"><path d="M1 1h2l1 2 1-2h1v3h2v2L7 7l2 2 1-3h1v5H6V9L4 7 1 4z" fill="#fff" stroke="#555b63" /></Svg>
      </button>
      <button type="button" aria-label="Прокрутить вверх" className="flex h-[19px] shrink-0 items-center justify-center">
        <svg viewBox="0 0 9 5" className="h-[5px] w-[9px]"><path d="M0 5h9L4.500 0z" fill="#4b5058" /></svg>
      </button>
      <div className="flex h-[211px] w-4 shrink-0 flex-col items-center justify-center gap-px border border-[#7f858e] bg-linear-to-r from-[#f7f8fa] to-[#dfe2e8]">
        <span className="h-px w-2 bg-[#7f858e]" />
        <span className="h-px w-2 bg-[#7f858e]" />
        <span className="h-px w-2 bg-[#7f858e]" />
        <span className="h-px w-2 bg-[#7f858e]" />
      </div>
      <div className="flex-1" />
      <button type="button" aria-label="Прокрутить вниз" className="flex h-[14px] shrink-0 items-center justify-center">
        <svg viewBox="0 0 9 5" className="h-[5px] w-[9px]"><path d="M0 0h9L4.500 5z" fill="#4b5058" /></svg>
      </button>
      <button type="button" aria-label="Предыдущая страница" className="flex h-[21px] w-full shrink-0 items-center justify-center border-t border-[#a4a9b0]">
        <svg viewBox="0 0 6 8" className="h-2 w-1.5"><path d="M0 3.500h6L3 0zM0 8h6L3 4.500z" fill="#4b5058" /></svg>
      </button>
      <button type="button" aria-label="Выбор объекта" className="flex h-[7px] shrink-0 overflow-hidden">
        <span className="h-2 w-2 shrink-0 rounded-full border border-[#5b6068]" />
      </button>
    </div>
  );
}

export default function App() {
  return (
    <div className={`relative flex h-screen flex-col overflow-hidden border-x border-[#5f676d] ${UI}`}>
      <div className="flex shrink-0 flex-col bg-[linear-gradient(90deg,transparent_89%,#66777dcc_97%),linear-gradient(180deg,#66757b,#76848a_25%,#a3adb1_52%,#dfe2e4_82%,#eceeef)]">
        <TitleBar />
        <Tabs />
      </div>
      <Ribbon />
      <main className="flex min-h-0 flex-1 bg-linear-to-b from-[#cfd2d7] via-[#c3c7cc] to-[#afb3b8]">
        <div className="flex w-6 shrink-0 flex-col bg-[#c9cdd2]">
          <button type="button" aria-label="Позиция табуляции" className="mt-[3px] flex h-6 w-6 shrink-0 items-center justify-center border border-[#8d939b]">
            <span className="flex h-[15px] w-[15px] items-center justify-center border border-[#8d939b] bg-white">
              <Svg size="h-[7px] w-[7px]" box="0 0 7 7"><path d="M1.500 0v5.500H7" stroke="#333" strokeWidth="2" /></Svg>
            </span>
          </button>
          <VerticalRuler />
        </div>
        <div className="flex min-w-0 flex-1 flex-col">
          <HorizontalRuler />
          <div className="ml-6 mr-[25px] mt-[23px] flex min-h-0 flex-1">
            <article className="relative min-w-0 flex-1 overflow-hidden bg-white outline outline-[#8f9499] shadow-[0_0_10px_3px_#6f757c]">
              <DocumentTable />
              <button type="button" aria-label="Переместить таблицу" className="absolute left-[98px] top-16 flex h-[13px] w-[13px] items-center justify-center border border-[#8c929a] bg-[#eef3fa]">
                <Svg size="h-[9px] w-[9px]" box="0 0 9 9"><path d="M4.500 0v9M0 4.500h9M3.500 1.500h2M3.500 7.500h2M1.500 3.500v2M7.500 3.500v2" stroke="#2f5a9c" /></Svg>
              </button>
              <MiniToolbar />
              <ContextMenu />
              <AutoFitMenu />
              <Annotation />
            </article>
          </div>
        </div>
        <ScrollBar />
      </main>
    </div>
  );
}
